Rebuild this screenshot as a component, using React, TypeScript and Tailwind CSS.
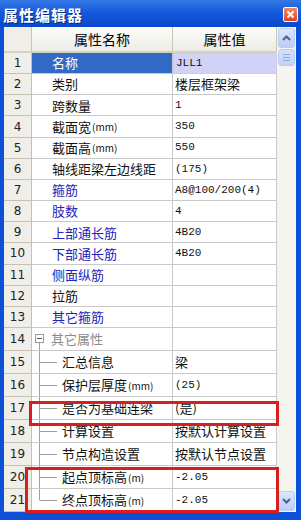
import React from "react";

type Row = {
  name: string;
  unit?: string;
  value?: string;
  tone?: "blue" | "gray" | "sel";
  tree?: "head" | "mid" | "last";
};

const rows: Row[] = [
  { name: "名称", value: "JLL1", tone: "sel" },
  { name: "类别", value: "楼层框架梁" },
  { name: "跨数量", value: "1" },
  { name: "截面宽", unit: "(mm)", value: "350" },
  { name: "截面高", unit: "(mm)", value: "550" },
  { name: "轴线距梁左边线距", value: "(175)" },
  { name: "箍筋", value: "A8@100/200(4)", tone: "blue" },
  { name: "肢数", value: "4", tone: "blue" },
  { name: "上部通长筋", value: "4B20", tone: "blue" },
  { name: "下部通长筋", value: "4B20", tone: "blue" },
  { name: "侧面纵筋", tone: "blue" },
  { name: "拉筋" },
  { name: "其它箍筋", tone: "blue" },
  { name: "其它属性", tone: "gray", tree: "head" },
  { name: "汇总信息", value: "梁", tree: "mid" },
  { name: "保护层厚度", unit: "(mm)", value: "(25)", tree: "mid" },
  { name: "是否为基础连梁", value: "(是)", tree: "mid" },
  { name: "计算设置", value: "按默认计算设置", tree: "mid" },
  { name: "节点构造设置", value: "按默认节点设置", tree: "mid" },
  { name: "起点顶标高", unit: "(m)", value: "-2.05", tree: "mid" },
  { name: "终点顶标高", unit: "(m)", value: "-2.05", tree: "last" },
];

const cjk = { fontFamily: '"Noto Sans CJK SC", "Liberation Sans", sans-serif' };
const mono = { fontFamily: '"Liberation Mono", "Noto Sans CJK SC", monospace' };

function TreeMark({ kind }: { kind: "head" | "mid" | "last" }) {
  if (kind === "head") {
    return (
      <svg width="9" height="22" className="shrink-0 self-stretch h-full" viewBox="0 0 9 22" preserveAspectRatio="none">
        <rect x="0.5" y="6.5" width="8" height="8" fill="white" stroke="#9a9a9a" />
        <line x1="2" y1="10.5" x2="7" y2="10.5" stroke="#555" />
        <line x1="4.5" y1="15" x2="4.5" y2="22" stroke="#a0a0a0" />
      </svg>
    );
  }
  return (
    <svg width="22" height="22" className="shrink-0 h-full" viewBox="0 0 22 22" preserveAspectRatio="none">
      <line x1="4.5" y1="0" x2="4.5" y2={kind === "last" ? 11 : 22} stroke="#a0a0a0" />
      <line x1="4.5" y1="11.5" x2="22" y2="11.5" stroke="#a0a0a0" />
    </svg>
  );
}

function ScrollBtn({ up }: { up?: boolean }) {
  return (
    <div className="mx-[1px] flex h-[20px] items-center justify-center rounded-[3px] border border-[#bccdf4] bg-gradient-to-b from-[#dde7fd] to-[#bacdf7]">
      <svg width="9" height="6" viewBox="0 0 9 6">
        <path
          d={up ? "M1 5 L4.5 1.5 L8 5" : "M1 1 L4.5 4.5 L8 1"}
          fill="none"
          stroke="#4d6185"
          strokeWidth="2"
        />
      </svg>
    </div>
  );
}

export default function App() {
  return (
    <div className="flex h-[520px] w-[301px] flex-col overflow-hidden bg-[#0d4fd6]">
      {/* title */}
      <div className="flex h-[27px] items-center justify-between bg-gradient-to-b from-[#3477e6] via-[#1257db] to-[#0a48cc] pl-[3px] pr-[3px]">
        <span
          className="pt-[2px] text-[15px] font-bold leading-none tracking-[1px] text-white [text-shadow:1px_1px_0_#0a2a80]"
          style={cjk}
        >
          属性编辑器
        </span>
        <div className="mt-[2px] flex h-[15px] w-[15px] items-center justify-center rounded-[2px] border border-white bg-gradient-to-b from-[#f08a68] to-[#d8401c]">
          <svg width="9" height="9" viewBox="0 0 9 9">
            <path d="M1.5 1.5 L7.5 7.5 M7.5 1.5 L1.5 7.5" stroke="white" strokeWidth="2" />
          </svg>
        </div>
      </div>

      {/* body */}
      <div className="flex flex-1 pb-[8px] pl-[4px] pr-[5px]">
        <div className="relative flex flex-1 bg-white">
          <div className="flex w-[273px] flex-col">
            {/* header */}
            <div className="grid h-[26px] grid-cols-[28px_141px_104px] border-b-2 border-[#d6d2c2] bg-gradient-to-b from-[#fdfdfb] to-[#ecebe4]">
              <div className="border-r border-[#c9c6b8] bg-[#efeee8]" />
              <div
                className="flex items-center justify-center border-r border-[#c9c6b8] text-[14px] text-black"
                style={cjk}
              >
                属性名称
              </div>
              <div className="flex items-center justify-center border-r border-[#c9c6b8] text-[14px] text-black" style={cjk}>
                属性值
              </div>
            </div>

            {/* rows */}
            <div className="flex flex-1 flex-col">
              {rows.map((r, i) => {
                const nameColor =
                  r.tone === "sel"
                    ? "text-white bg-[#316ac5]"
                    : r.tone === "blue"
                    ? "text-[#2323b8]"
                    : r.tone === "gray"
                    ? "text-[#8c8c8c]"
                    : "text-[#111]";
                const ascii = r.value !== undefined && /^[\x00-\x7f]+$/.test(r.value);
                return (
                  <div key={i} className="grid flex-1 grid-cols-[28px_141px_104px]">
                    <div
                      className="flex items-center justify-center border-b border-r border-[#c4c1b4] bg-[#efeee8] text-[12px] text-[#222]"
                      style={{ fontFamily: '"DejaVu Sans", sans-serif' }}
                    >
                      {i + 1}
                    </div>
                    <div
                      className={`flex items-center overflow-hidden whitespace-nowrap border-b border-r border-[#c9c9c9] text-[13px] ${nameColor} ${
                        r.tree === "head" ? "pl-[3px]" : r.tree ? "pl-[3px]" : "pl-[20px]"
                      }`}
                      style={cjk}
                    >
                      {r.tree === "head" && <TreeMark kind="head" />}
                      {r.tree === "head" && <span className="w-[7px] shrink-0" />}
                      {(r.tree === "mid" || r.tree === "last") && <TreeMark kind={r.tree} />}
                      {(r.tree === "mid" || r.tree === "last") && <span className="w-[5px] shrink-0" />}
                      <span>{r.name}</span>
                      {r.unit && <span className="ml-[1px] text-[10px]">{r.unit}</span>}
                    </div>
                    <div
                      className={`flex items-center overflow-hidden whitespace-nowrap border-b border-r border-[#c9c9c9] pl-[2px] text-[#111] ${
                        r.tone === "sel" ? "border border-dotted border-[#333] bg-[#d2d2f6]" : ""
                      } ${ascii ? "text-[11px]" : "text-[13px]"}`}
                      style={ascii ? mono : cjk}
                    >
                      {r.value}
                    </div>
                  </div>
                );
              })}
            </div>
          </div>

          {/* scrollbar */}
          <div className="flex w-[19px] flex-col bg-[#f5f4ef] pb-[1px] pt-[1px]">
            <ScrollBtn up />
            <div className="mx-[1px] mt-[1px] flex h-[17px] flex-col items-center justify-center gap-[2px] rounded-[3px] border border-[#bccdf4] bg-gradient-to-b from-[#d5e1fc] to-[#c0d1f8]">
              <div className="h-px w-[7px] bg-[#90a8e0]" />
              <div className="h-px w-[7px] bg-[#90a8e0]" />
              <div className="h-px w-[7px] bg-[#90a8e0]" />
            </div>
            <div className="flex-1" />
            <ScrollBtn />
          </div>

          {/* highlight boxes */}
          <div className="pointer-events-none absolute left-[25px] top-[374px] h-[25px] w-[250px] border-[3px] border-[#d81e1e]" />
          <div className="pointer-events-none absolute left-[21px] top-[440px] h-[46px] w-[254px] border-[3px] border-[#d81e1e]" />
        </div>
      </div>
    </div>
  );
}
